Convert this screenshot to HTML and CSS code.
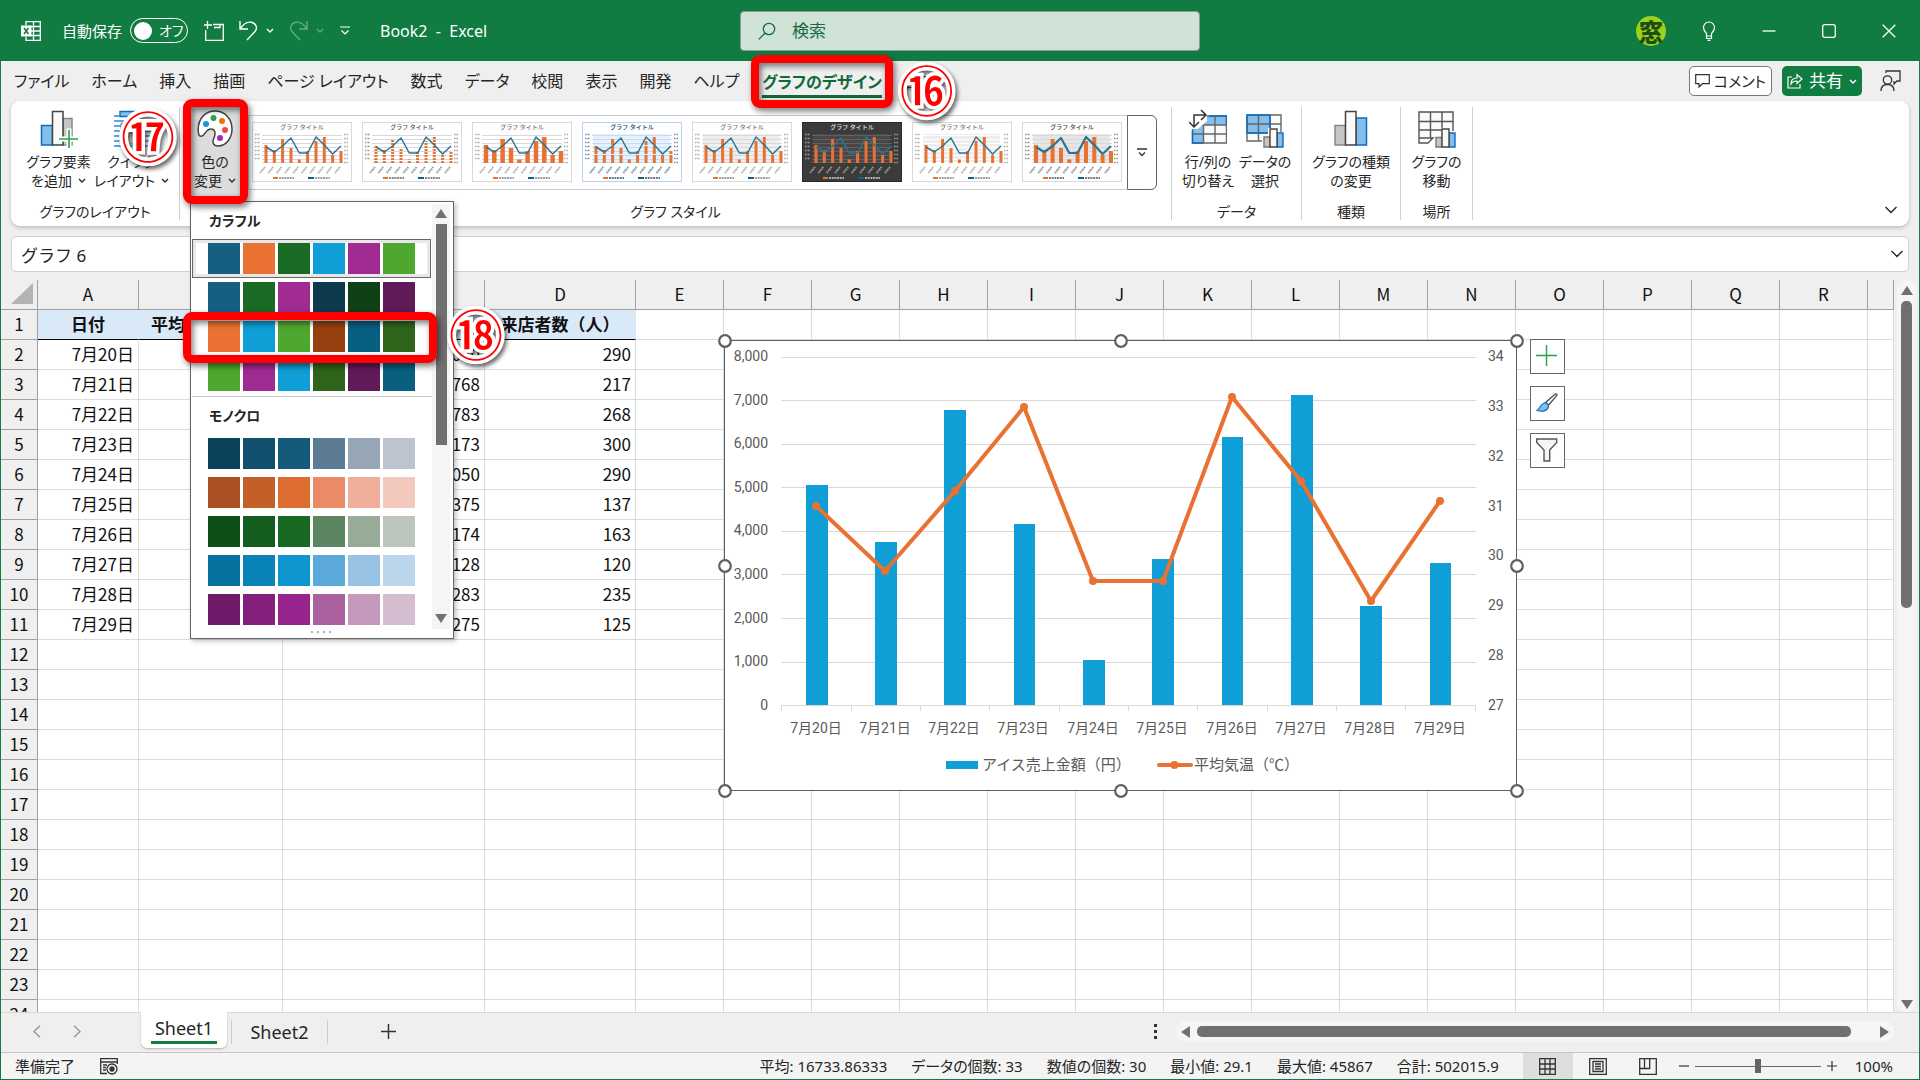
FILE: index.html
```html
<!DOCTYPE html>
<html lang="ja">
<head>
<meta charset="utf-8">
<title>Book2 - Excel</title>
<link rel="stylesheet" href="styles.css">
</head>
<body>
<svg class="defs" aria-hidden="true">
  <symbol id="chev" viewBox="0 0 8 5"><path d="M1 1l3 3 3-3" fill="none" stroke="currentColor" stroke-width="1.3"/></symbol>
  <symbol id="chev-lg" viewBox="0 0 14 8"><path d="M1.500 1l5.500 5.500L12.500 1" fill="none" stroke="currentColor" stroke-width="1.400"/></symbol>
  <symbol id="thumb" viewBox="0 0 100 60">
    <rect x=".5" y=".5" width="99" height="59" fill="var(--bg)" stroke="var(--edge)"/>
    <rect x="11" y="12" width="77" height="29" fill="var(--plot)"/>
    <path d="M10 13.500h80M10 17.500h80M10 21.500h80M10 25.500h80M10 29.500h80M10 33.500h80M10 37.500h80M10 40.500h80" stroke="var(--grid)" stroke-width="1"/>
    <path d="M3 12.500h5M3 16.500h5M3 20.500h5M3 24.500h5M3 28.500h5M3 32.500h5M3 36.500h5M92 12.500h4M92 16.500h4M92 20.500h4M92 24.500h4M92 28.500h4M92 32.500h4M92 36.500h4M92 40.500h4" stroke="var(--ink)" stroke-width="1.500" opacity=".6" stroke-dasharray="1 .5"/>
    <path d="M14 41V23M22.300 41V28M30.600 41V17M39 41V26M47.300 41v-3.500M55.600 41V29M64 41V19M72.300 41V15M80.600 41v-8M89 41V29" stroke="#e97132" stroke-width="var(--bw)" stroke-dasharray="var(--dash)"/>
    <path d="M14 25l8.300 5 8.300-6 8.400-8 8.300 15h8.300L64 15l8.300 8 8.300 9 8.400-8" fill="none" stroke="#2b7493" stroke-width="var(--lw)" stroke-linejoin="round"/>
    <path d="M13 45l-5 6M21.300 45l-5 6M29.600 45l-5 6M38 45l-5 6M46.300 45l-5 6M54.600 45l-5 6M63 45l-5 6M71.300 45l-5 6M79.600 45l-5 6M88 45l-5 6" stroke="var(--ink)" stroke-width="2" opacity=".55" stroke-dasharray="1.500 .6"/>
    <path d="M21 56h5" stroke="#e97132" stroke-width="2"/><path d="M56 56h6" stroke="#156082" stroke-width="2"/>
    <path d="M27 56h15M63 56h15" stroke="var(--ink)" stroke-width="2" stroke-dasharray="2 .7" opacity=".7"/>
    <text x="50" y="7" text-anchor="middle" fill="var(--ink)">グラフ タイトル</text>
  </symbol>
</svg>

<div class="window">
  <header class="titlebar">
    <div class="quick">
      <svg class="i-excel" width="20" height="20" viewBox="0 0 20 20" fill="none" stroke="#fff"><path d="M5 4V.7h14.300v18.600H5V16M5 5.500h14M10 10h9M10 14.500h9M12.500.7v18.600" stroke-width="1.300"/><rect x="0" y="4.500" width="10.500" height="11" fill="#fff" stroke="none"/><path d="M3 7l4.500 6M7.500 7L3 13" stroke="#107c41" stroke-width="1.600"/></svg>
      <span class="auto-label" id="auto">自動保存</span>
      <button class="toggle" role="switch" aria-checked="false" aria-labelledby="auto"><i></i>オフ</button>
      <button class="bare save" aria-label="保存"><svg width="20" height="20" viewBox="0 0 20 20" fill="none" stroke="#fff" stroke-width="1.300"><path d="M9 3.500h10.300v15.800H1.700V9M3.500 0v8M0 4h8M16 3.500v3h-6"/></svg></button>
      <button class="bare undo" aria-label="元に戻す"><svg width="19" height="21" viewBox="0 0 19 21" fill="none" stroke="#fff" stroke-width="1.400"><path d="M1 1v8h8M1.500 8.500C5 3 9 1.500 12.500 2.300c4.500 1 6.500 5.700 3.500 9.200L8 20"/></svg><svg class="c" width="8" height="5"><use href="#chev"/></svg></button>
      <button class="bare redo" aria-label="やり直し" disabled><svg width="19" height="21" viewBox="0 0 19 21" fill="none" stroke="#fff" stroke-width="1.400"><path d="M18 1v8h-8M17.500 8.500C14 3 10 1.500 6.500 2.300 2 3.300 0 8 3 11.500L11 20"/></svg><svg class="c" width="8" height="5"><use href="#chev"/></svg></button>
      <button class="bare more" aria-label="クイック アクセスの設定"><svg width="10" height="9" viewBox="0 0 10 9" fill="none" stroke="#fff" stroke-width="1.200"><path d="M0 1h10M1.500 4.500L5 8l3.500-3.500"/></svg></button>
      <span class="book">Book2&nbsp; -&nbsp; Excel</span>
    </div>
    <label class="search"><svg width="18" height="18" viewBox="0 0 18 18" fill="none" stroke="#176b3e" stroke-width="1.300"><circle cx="11" cy="7" r="5.700"/><path d="M7 11.200L.8 17.400"/></svg><input type="text" placeholder="検索" aria-label="検索"></label>
    <div class="wincontrols">
      <span class="avatar">窓</span>
      <button class="bare" aria-label="ヒント"><svg width="14" height="20" viewBox="0 0 14 20" fill="none" stroke="#fff" stroke-width="1.200"><path d="M4.500 15v-2.500C2.500 10.500 1.500 9 1.500 6.500a5.500 5.500 0 0 1 11 0c0 2.500-1 4-3 6V15zM4.500 15v2.500h5V15M5.500 19.300h3"/></svg></button>
      <button class="bare" aria-label="最小化"><svg width="14" height="14" viewBox="0 0 14 14" stroke="#fff" stroke-width="1.300"><path d="M.5 7h13"/></svg></button>
      <button class="bare" aria-label="最大化"><svg width="14" height="14" viewBox="0 0 14 14" fill="none" stroke="#fff" stroke-width="1.300"><rect x=".7" y=".7" width="12.600" height="12.600" rx="2"/></svg></button>
      <button class="bare" aria-label="閉じる"><svg width="14" height="14" viewBox="0 0 14 14" stroke="#fff" stroke-width="1.300"><path d="M.7.7l12.600 12.600M13.300.7L.7 13.300"/></svg></button>
    </div>
  </header>

  <nav class="tabs">
    <a href="#">ファイル</a><a href="#">ホーム</a><a href="#">挿入</a><a href="#">描画</a><a href="#">ページ レイアウト</a><a href="#">数式</a><a href="#">データ</a><a href="#">校閲</a><a href="#">表示</a><a href="#">開発</a><a href="#">ヘルプ</a>
    <span class="tabwrap"><a href="#" class="current">グラフのデザイン</a><span class="mark mark-tab"></span><b class="num num-tab">⑯</b></span><a href="#" class="fmt">書式</a>
    <div class="tabs-right">
      <button class="comment"><svg width="15" height="14" viewBox="0 0 15 14" fill="none" stroke="#333" stroke-width="1.200"><path d="M.7.7h13.600v9H7.500L4 13V9.700H.7z"/></svg>コメント</button>
      <button class="share"><svg width="16" height="16" viewBox="0 0 16 16" fill="none" stroke="#fff" stroke-width="1.200"><path d="M5 4H1v11h12v-4M4 11c0-4 2-6 6-6V1.500L15 6l-5 4.500V8C7.500 8 5.500 8.500 4 11z"/></svg>共有<svg width="8" height="5"><use href="#chev"/></svg></button>
      <button class="bare dark" aria-label="フィードバック"><svg width="21" height="22" viewBox="0 0 21 22" fill="none" stroke="#333" stroke-width="1.300"><circle cx="7.500" cy="10" r="4.200"/><path d="M1 21c0-4 2.500-6.500 6.500-6.500S14 17 14 21M6 3V1h14v10h-3l-3 3v-3"/></svg></button>
    </div>
  </nav>

  <section class="ribbon">
    <div class="group">
      <div class="tools">
        <button class="tool w73"><svg width="38" height="40" viewBox="0 0 38 40"><path d="M1.500 16.500h11V36h-11z" fill="#83beec" stroke="#0f6cbd" stroke-width="1.500"/><path d="M23 9.500h9V36h-9z" fill="#c8c6c4" stroke="#8a8886" stroke-width="1.500"/><path d="M12.500 2.500H23V36H12.500z" fill="#fafafa" stroke="#444" stroke-width="1.500"/><path d="M29 19.500v21M18 30h21" stroke="#fff" stroke-width="5"/><path d="M29 21v18M19 30h19" stroke="#26a148" stroke-width="1.600"/></svg><span>グラフ要素</span><span>を追加 <svg width="8" height="5"><use href="#chev"/></svg></span></button>
        <button class="tool w73"><svg width="38" height="40" viewBox="0 0 38 40"><path d="M7 2.500h24v5H7z" fill="#83beec" stroke="#0f6cbd" stroke-width="1.400"/><path d="M1 7h6M1 12h36M1 17h36M1 22h36M1 27h36M1 32h36M1 37h36" stroke="#2b88d8" stroke-width="1.400"/><path d="M8 14h20v21H8z" fill="#c8c6c4" stroke="#777"/></svg><span>クイック</span><span>レイアウト <svg width="8" height="5"><use href="#chev"/></svg></span></button>
      </div>
      <div class="glabel">グラフのレイアウト</div>
      <b class="num num-btn">⑰</b>
    </div>
    <div class="group grow">
      <div class="tools styles">
        <div class="colorwrap">
          <button class="tool color" aria-expanded="true"><svg width="36" height="40" viewBox="0 0 36 40"><path d="M1.200 22C.5 9 9 2 18 2c10 0 17 8 17 18 0 8-5 17-14 17-5 0-6-4-4-8 2-5 1-9-3-9-5 0-6 6-9 7-3 1-3.600-1.500-3.800-5z" fill="#fff" stroke="#444" stroke-width="1.500"/><circle cx="9" cy="15" r="3" fill="#1e8fd8"/><circle cx="16.500" cy="9" r="3" fill="#2fa04a"/><circle cx="25" cy="12" r="3" fill="#e8750a"/><circle cx="28" cy="21" r="3" fill="#f0474b"/><circle cx="23" cy="29" r="3" fill="#9b2fae"/></svg><span>色の</span><span>変更 <svg width="8" height="5"><use href="#chev"/></svg></span></button>
          <div class="mark mark-btn"></div>
          <div class="menu">
            <div class="menu-list">
              <h2>カラフル</h2>
              <div class="palettes" id="vivid"></div>
              <hr>
              <h2>モノクロ</h2>
              <div class="palettes" id="mono"></div>
            </div>
            <div class="menu-scroll"><i class="up"></i><i class="bar"></i><i class="down"></i></div>
            <div class="grip"><i></i><i></i><i></i><i></i></div>
          </div>
        </div>
        <div class="gallery">
          <div class="thumbs">
            <svg class="th"><use href="#thumb"/></svg>
            <svg class="th t2"><use href="#thumb"/></svg>
            <svg class="th t3"><use href="#thumb"/></svg>
            <svg class="th t4"><use href="#thumb"/></svg>
            <svg class="th t5"><use href="#thumb"/></svg>
            <svg class="th t6"><use href="#thumb"/></svg>
            <svg class="th t7"><use href="#thumb"/></svg>
            <svg class="th t8"><use href="#thumb"/></svg>
          </div>
          <button class="expand" aria-label="その他"><svg width="10" height="9" viewBox="0 0 10 9" fill="none" stroke="#333" stroke-width="1.300"><path d="M0 1h10M2 4.500L5 7.500l3-3"/></svg></button>
        </div>
      </div>
      <div class="glabel">グラフ スタイル</div>
    </div>
    <div class="group w130">
      <div class="tools">
        <button class="tool w57"><svg width="38" height="40" viewBox="0 0 38 40"><path d="M3 7h34v27H3z" fill="#fafafa"/><path d="M14 7h23v9H14zM3 16h11v18H3z" fill="#83beec"/><path d="M3.500 16v18h34V7H15M14.500 16v18M26 7v27M3.500 16h34M3.500 25h34" fill="none" stroke="#666" stroke-width="1.400"/><path d="M14.500 34H3.500V22M20 7h17.500v9" fill="none" stroke="#0f6cbd" stroke-width="1.400"/><path d="M0 0h18v12l-9 8H0z" fill="#fff"/><path d="M5 18V6h12M12 1l5 5-5 5M0 13l5 5 5-5" fill="none" stroke="#333" stroke-width="1.500"/></svg><span>行/列の</span><span>切り替え</span></button>
        <button class="tool w57"><svg width="38" height="40" viewBox="0 0 38 40"><path d="M1 6h34v26H1z" fill="#fafafa"/><path d="M1 6h23v18H1z" fill="#83beec"/><path d="M1 6h34v26H1zM12.500 6v26M24 6v26M1 15h34M1 24h34" fill="none" stroke="#666" stroke-width="1.400"/><path d="M24 6H1v18h23z" fill="none" stroke="#0f6cbd" stroke-width="1.400"/><path d="M16 27h6v-8h9v4h7v17H16z" fill="#fff"/><path d="M18 28h6v10h-6z" fill="#c8c6c4" stroke="#777" stroke-width="1.400"/><path d="M31 24h6v14h-6z" fill="#83beec" stroke="#0f6cbd" stroke-width="1.400"/><path d="M24 20h7v18h-7z" fill="#fafafa" stroke="#444" stroke-width="1.400"/></svg><span>データの</span><span>選択</span></button>
      </div>
      <div class="glabel">データ</div>
    </div>
    <div class="group w99">
      <div class="tools">
        <button class="tool"><svg width="38" height="40" viewBox="0 0 38 40"><path d="M3 16.500h10.500V36H3z" fill="#c8c6c4" stroke="#8a8886" stroke-width="1.500"/><path d="M24 9h10.500v27H24z" fill="#83beec" stroke="#0f6cbd" stroke-width="1.500"/><path d="M13.500 2.500H24V36H13.500z" fill="#fafafa" stroke="#444" stroke-width="1.500"/></svg><span>グラフの種類</span><span>の変更</span></button>
      </div>
      <div class="glabel">種類</div>
    </div>
    <div class="group w72">
      <div class="tools">
        <button class="tool"><svg width="38" height="40" viewBox="0 0 38 40"><path d="M1 3h34v21H20v8h-8l-3 3H1z" fill="#fafafa"/><path d="M35 22V3H1v31h9l5-5H1M12.500 3v26M24 3v16M1 12.500h34M1 21h24" fill="none" stroke="#555" stroke-width="1.400"/><path d="M18 28.500h6V38h-6z" fill="#c8c6c4" stroke="#777" stroke-width="1.400"/><path d="M31 24h6v14h-6z" fill="#83beec" stroke="#0f6cbd" stroke-width="1.400"/><path d="M24 20h7v18h-7z" fill="#fafafa" stroke="#444" stroke-width="1.400"/></svg><span>グラフの</span><span>移動</span></button>
      </div>
      <div class="glabel">場所</div>
    </div>
    <button class="bare collapse" aria-label="リボンを折りたたむ"><svg width="14" height="8"><use href="#chev-lg"/></svg></button>
  </section>

  <div class="formula"><input type="text" value="グラフ 6" aria-label="名前ボックス"><svg width="14" height="8"><use href="#chev-lg"/></svg></div>

  <main class="sheet">
    <div class="canvas">
      <table class="grid">
        <colgroup id="cols"></colgroup>
        <thead><tr id="head"></tr></thead>
        <tbody id="body"></tbody>
      </table>
      <svg class="chart" width="810" height="468" viewBox="716 332 810 468">
        <rect x="724.500" y="340.500" width="792" height="450" fill="#fff" stroke="#5f5f5f"/>
        <path d="M781 357.500h695M781 400.500h695M781 444.500h695M781 487.500h695M781 531.500h695M781 574.500h695M781 618.500h695M781 662.500h695M781 705.500h695" stroke="#d9d9d9"/>
        <path d="M781.500 705v6M851.500 705v6M920.500 705v6M989.500 705v6M1059.500 705v6M1128.500 705v6M1197.500 705v6M1267.500 705v6M1336.500 705v6M1405.500 705v6M1475.500 705v6" stroke="#d9d9d9"/>
        <path d="M806 485h22v220h-22zM875 542h22v163h-22zM944 410h22v295h-22zM1014 524h21v181h-21zM1083 660h22v45h-22zM1152 559h22v146h-22zM1222 437h21v268h-21zM1291 395h22v310h-22zM1360 606h22v99h-22zM1430 563h21v142h-21z" fill="#0f9ed5"/>
        <path d="M816 506L885 571 955 491 1024 407 1093 581H1163L1232 397 1301 481 1371 601 1440 501" fill="none" stroke="#e97132" stroke-width="4" stroke-linejoin="round"/>
        <g fill="#e97132"><circle cx="816" cy="506" r="4"/><circle cx="885" cy="571" r="4"/><circle cx="955" cy="491" r="4"/><circle cx="1024" cy="407" r="4"/><circle cx="1093" cy="581" r="4"/><circle cx="1163" cy="581" r="4"/><circle cx="1232" cy="397" r="4"/><circle cx="1301" cy="481" r="4"/><circle cx="1371" cy="601" r="4"/><circle cx="1440" cy="501" r="4"/></g>
        <g class="axis" text-anchor="end"><text x="768" y="361">8,000</text><text x="768" y="405">7,000</text><text x="768" y="448">6,000</text><text x="768" y="492">5,000</text><text x="768" y="535">4,000</text><text x="768" y="579">3,000</text><text x="768" y="623">2,000</text><text x="768" y="666">1,000</text><text x="768" y="710">0</text></g>
        <g class="axis"><text x="1488" y="361">34</text><text x="1488" y="411">33</text><text x="1488" y="461">32</text><text x="1488" y="511">31</text><text x="1488" y="560">30</text><text x="1488" y="610">29</text><text x="1488" y="660">28</text><text x="1488" y="710">27</text></g>
        <g class="axis" text-anchor="middle"><text x="816" y="733">7月20日</text><text x="885" y="733">7月21日</text><text x="954" y="733">7月22日</text><text x="1023" y="733">7月23日</text><text x="1093" y="733">7月24日</text><text x="1162" y="733">7月25日</text><text x="1232" y="733">7月26日</text><text x="1301" y="733">7月27日</text><text x="1370" y="733">7月28日</text><text x="1440" y="733">7月29日</text></g>
        <path d="M946 761h32v8h-32z" fill="#0f9ed5"/><path d="M1159 765h32" stroke="#e97132" stroke-width="4" stroke-linecap="round"/><circle cx="1174.500" cy="765" r="4" fill="#e97132"/>
        <g class="legend"><text x="982" y="770">アイス売上金額（円）</text><text x="1194" y="770">平均気温（℃）</text></g>
        <g fill="#fff" stroke="#5f5f5f" stroke-width="2.200"><circle cx="725" cy="341" r="5.800"/><circle cx="1121" cy="341" r="5.800"/><circle cx="1517" cy="341" r="5.800"/><circle cx="725" cy="566" r="5.800"/><circle cx="1517" cy="566" r="5.800"/><circle cx="725" cy="791" r="5.800"/><circle cx="1121" cy="791" r="5.800"/><circle cx="1517" cy="791" r="5.800"/></g>
      </svg>
      <div class="chart-tools">
        <button aria-label="グラフ要素"><svg width="22" height="22" viewBox="0 0 22 22"><path d="M10.500 0v21M0 10.500h21" stroke="#26a148" stroke-width="1.400"/></svg></button>
        <button aria-label="グラフ スタイル"><svg width="22" height="22" viewBox="0 0 22 22"><path d="M9.500 10.500L19 2.200c1.500-1 2.500 0 1.600 1.500L12.800 13z" fill="#fff" stroke="#444" stroke-width="1.200"/><path d="M1 18.500c3-1 3-6.500 7.500-7.500 2.500-.3 4.500 2 3.800 4-1 4-6.300 5-11.300 3.500z" fill="#83beec" stroke="#0f6cbd" stroke-width="1.200"/></svg></button>
        <button aria-label="グラフ フィルター"><svg width="22" height="24" viewBox="0 0 22 24"><path d="M.7 1h20v3.500l-7 7.500v11H8V12L.7 4.500z" fill="#f5f5f5" stroke="#555" stroke-width="1.400"/></svg></button>
      </div>
    </div>
    <div class="vscroll"><i class="up"></i><i class="bar"></i><i class="down"></i></div>
  </main>

  <div class="sheetbar">
    <button class="bare nav" aria-label="前のシート"><svg width="8" height="13" viewBox="0 0 8 13" fill="none" stroke="#999" stroke-width="1.400"><path d="M7 .7L1 6.500l6 5.800"/></svg></button>
    <button class="bare nav" aria-label="次のシート"><svg width="8" height="13" viewBox="0 0 8 13" fill="none" stroke="#999" stroke-width="1.400"><path d="M1 .7l6 5.800-6 5.800"/></svg></button>
    <a href="#" class="stab active"><span>Sheet1</span></a>
    <a href="#" class="stab other"><span>Sheet2</span></a>
    <button class="bare add" aria-label="新しいシート"><svg width="15" height="15" viewBox="0 0 15 15" stroke="#333" stroke-width="1.500"><path d="M7.500 0v15M0 7.500h15"/></svg></button>
    <div class="dots"><i></i><i></i><i></i></div>
    <div class="hscroll"><i class="left"></i><i class="bar"></i><i class="right"></i></div>
  </div>

  <footer class="status">
    <span class="ready">準備完了</span>
    <svg width="18" height="17" viewBox="0 0 18 17" fill="none" stroke="#333" stroke-width="1.300"><path d="M7 15.500H.7V.7h16.600V6M.7 4h16.600M3 7h4M3 9.500h3M3 12h3"/><circle cx="12" cy="11" r="5"/><circle cx="12" cy="11" r="2" fill="#333"/></svg>
    <div class="stats"><span>平均: 16733.86333</span><span>データの個数: 33</span><span>数値の個数: 30</span><span>最小値: 29.1</span><span>最大値: 45867</span><span>合計: 502015.9</span></div>
    <div class="views">
      <button class="on" aria-label="標準"><svg width="17" height="17" viewBox="0 0 17 17" fill="none" stroke="#333" stroke-width="1.300"><path d="M.7.7h15.600v15.600H.7zM6 .7v15.600M11 .7v15.600M.7 6h15.600M.7 11h15.600"/></svg></button>
      <button aria-label="ページ レイアウト"><svg width="18" height="17" viewBox="0 0 18 17" fill="none" stroke="#333" stroke-width="1.300"><path d="M.7.7h16.600v15.600H.7zM4 3.500h10v10H4zM6 6h6M6 8.500h6M6 11h6"/></svg></button>
      <button aria-label="改ページ プレビュー"><svg width="18" height="17" viewBox="0 0 18 17" fill="none" stroke="#333" stroke-width="1.300"><path d="M.7.7h16.600v15.600H.7zM.7 10.500h10V.7M5.500.7v9.800"/></svg></button>
    </div>
    <button class="bare zoomb" aria-label="縮小"><svg width="10" height="10" viewBox="0 0 10 10" stroke="#333" stroke-width="1.200"><path d="M0 5h10"/></svg></button>
    <input type="range" min="0" max="100" value="50" aria-label="ズーム">
    <button class="bare zoomb" aria-label="拡大"><svg width="10" height="10" viewBox="0 0 10 10" stroke="#333" stroke-width="1.200"><path d="M0 5h10M5 0v10"/></svg></button>
    <span class="pct">100%</span>
  </footer>
</div>
<script src="script.js"></script>
</body>
</html>
```
FILE: styles.css
```css
* { box-sizing: border-box; }
body, h2 { margin: 0; }
body {
  font-family: "Noto Sans", "Noto Sans CJK JP", sans-serif;
  font-size: 15px;
  line-height: 20px;
  color: #262626;
  background: #efefef;
}
button, input { font: inherit; color: inherit; padding: 0; margin: 0; }
button { font-feature-settings: inherit; }
a { color: inherit; text-decoration: none; }
svg { display: block; flex: none; }
.defs { position: absolute; width: 0; height: 0; }
.defs text { font: 500 6px "Noto Sans CJK JP", sans-serif; }

.window {
  display: flex;
  flex-direction: column;
  height: 100vh;
  border: solid #107c41;
  border-width: 0 1px 1px;
  overflow: hidden;
  font-feature-settings: "palt";
}
.bare { display: flex; align-items: center; justify-content: center; border: 0; background: none; }

/* title bar */
.titlebar {
  display: grid;
  grid-template-columns: 1fr 460px 1fr;
  align-items: center;
  height: 61px;
  flex: none;
  padding-left: 20px;
  background: #107c41;
  color: #fff;
}
.quick { display: flex; align-items: center; }
.auto-label { margin: 0 8px 0 21px; }
.toggle {
  display: flex;
  align-items: center;
  gap: 7px;
  width: 58px;
  height: 25px;
  padding: 0 0 0 3px;
  border: 1px solid #fff;
  border-radius: 13px;
  background: none;
  font-size: 14px;
}
.toggle i { width: 18px; height: 18px; border-radius: 50%; background: #fff; }
.save { margin-left: 16px; }
.undo, .redo { gap: 8px; margin-left: 15px; color: #fff; }
.redo { opacity: .35; }
.more { margin-left: 16px; }
.book { margin-left: 30px; font-size: 16px; white-space: nowrap; }
.search {
  display: flex;
  align-items: center;
  gap: 16px;
  height: 40px;
  padding-left: 17px;
  border: 1px solid #8a9c92;
  border-radius: 4px;
  background: #cfe3d8;
}
.search input { flex: 1; min-width: 0; border: 0; outline: 0; background: none; font-size: 17px; }
.search input::placeholder { color: #176b3e; opacity: 1; }
.wincontrols { display: flex; justify-content: flex-end; align-items: center; }
.wincontrols .bare { width: 60px; height: 40px; }
.avatar {
  width: 30px;
  height: 30px;
  margin-right: 13px;
  border-radius: 50%;
  background: #9ad21c;
  color: #1d4d12;
  font: 900 24px/30px "Noto Sans CJK JP", sans-serif;
  text-align: center;
}

/* ribbon tabs */
.tabs {
  display: flex;
  align-items: center;
  height: 40px;
  flex: none;
  padding-left: 2px;
  font-size: 16px;
  white-space: nowrap;
}
.tabs a { padding: 0 11px; line-height: 24px; }
.tabwrap { position: relative; z-index: 6; margin-left: 1px; }
.tabwrap .current { display: block; padding: 0; margin: 0 11px -4px; color: #0e6b38; font-weight: 700; border-bottom: 3px solid #0e6b38; line-height: 26px; }
.tabs-right { display: flex; align-items: center; margin-left: auto; gap: 10px; padding-right: 18px; }
.comment, .share { display: flex; align-items: center; justify-content: center; gap: 4px; height: 30px; border-radius: 5px; }
.comment { width: 83px; border: 1px solid #777; background: #fff; font-size: 15px; }
.share { width: 80px; gap: 6px; border: 0; background: #107c41; color: #fff; font-size: 17px; }
.tabs-right .dark { margin-left: 8px; }

/* annotations */
.mark {
  position: absolute;
  border: 8px solid #f00;
  border-radius: 9px;
  filter: drop-shadow(2px 3px 3px rgba(0, 0, 0, .55));
  pointer-events: none;
}
.mark-tab { inset: -14px 0 -14px 0; }
.mark-btn { inset: -8px -8px -6px -7px; z-index: 4; }
.mark-row { inset: -5px -6px -7px -9px; }
.num {
  position: absolute;
  z-index: 8;
  width: 60px;
  color: #f00;
  font: 500 54px/60px "Noto Sans CJK JP", sans-serif;
  text-align: center;
  -webkit-text-stroke: 7px #fff;
  paint-order: stroke fill;
  filter: drop-shadow(2px 3px 2px rgba(0, 0, 0, .6));
  pointer-events: none;
}
.num-tab { left: 100%; top: -10px; margin-left: 4px; }
.num-btn { left: 107px; top: -2px; }
.num-row { left: 100%; top: -14px; margin-left: 15px; }

/* ribbon */
.ribbon {
  position: relative;
  z-index: 5;
  display: flex;
  height: 125px;
  flex: none;
  margin: 0 10px;
  padding: 6px 0;
  border-radius: 9px;
  background: #fff;
  box-shadow: 0 2px 4px rgba(0, 0, 0, .2);
  font-size: 14px;
}
.group { position: relative; display: flex; flex-direction: column; justify-content: space-between; width: 169px; flex: none; border-right: 1px solid #d0d0d0; }
.group.grow { width: auto; flex: 0 1 992px; }
.w130 { width: 130px; }
.w99 { width: 99px; }
.w72 { width: 72px; }
.tools { display: flex; justify-content: center; }
.glabel { text-align: center; line-height: 16px; }
.tool {
  display: flex;
  flex-direction: column;
  align-items: center;
  min-width: 48px;
  height: 91px;
  padding: 2px 0 0;
  border: 0;
  background: none;
  line-height: 19px;
  white-space: nowrap;
}
.tool > svg { margin-bottom: 3px; }
.tool span { display: flex; align-items: center; gap: 6px; }
.w73 { width: 73px; }
.w57 { width: 57px; }
.styles { justify-content: flex-start; padding-left: 10px; gap: 8px; }
.colorwrap { position: relative; height: 91px; }
.color { width: 50px; background: #dcdcdc; }
.gallery { display: flex; flex: none; height: 75px; margin-top: 8px; border: 1px solid #ccc; border-radius: 0 6px 6px 0; }
.thumbs { display: flex; gap: 10px; padding: 6px 6px 0 3px; }
.expand { display: flex; align-items: center; justify-content: center; width: 30px; margin: -1px; border: 1px solid #666; border-radius: 0 6px 6px 0; background: #fff; }
.collapse { position: absolute; right: 11px; bottom: 12px; }
.th {
  width: 100px;
  height: 60px;
  --bg: #fff; --edge: #d9d9d9; --plot: #fff; --grid: #d9d9d9; --ink: #777;
  --bw: 3px; --lw: 1.5px; --dash: none;
}
.t2 { --dash: 2 1; --ink: #555; }
.t3 { --bw: 4.5px; }
.t4 { --edge: #b5d3ef; --plot: #e6f1fb; --grid: #c5dcf2; --ink: #24405f; --dash: 8 1; }
.t5 { --plot: #eee; }
.t6 { --bg: #3b3b3b; --edge: #2a2a2a; --plot: #484848; --grid: #606060; --ink: #e0e0e0; }
.t7 { --plot: #eee; --grid: #fff; }
.t8 { --plot: #e6e6e6; --bw: 4px; --lw: 2.2px; --ink: #444; }

/* colour menu */
.menu {
  position: absolute;
  left: 0;
  top: 94px;
  z-index: 3;
  display: grid;
  grid-template-columns: 1fr 18px;
  width: 264px;
  padding: 0 3px 0 1px;
  border: 1px solid #666;
  background: #fff;
  box-shadow: 2px 2px 5px rgba(0, 0, 0, .25);
}
.menu h2 { padding: 9px 0 8px 17px; font-size: 14px; line-height: 20px; }
.menu hr { margin: 1px 0 0; border: 0; border-top: 1px solid #ccc; }
.palette {
  position: relative;
  display: flex;
  gap: 3px;
  width: 239px;
  height: 39px;
  padding: 4px 0 4px 16px;
  border: 0;
  background: #fff;
}
.palette.selected { box-shadow: inset 0 0 0 1px #666, inset 0 0 0 4px #e8e8e8; }
.palette i { width: 32px; height: 31px; }
.palette.pick { z-index: 4; }
.menu-scroll { display: flex; flex-direction: column; align-items: center; margin-top: 2px; background: #f5f5f5; }
.up, .down { border: 6px solid transparent; }
.up { border-top: 0; border-bottom: 9px solid #707070; }
.down { border-bottom: 0; border-top: 9px solid #707070; }
.bar { background: #707070; border-radius: 5px; }
.menu-scroll .up { margin: 5px 0 6px; }
.menu-scroll .bar { width: 11px; height: 221px; border-radius: 0; }
.menu-scroll .down { margin: auto 0 6px; }
.grip { grid-column: 1 / 3; display: flex; justify-content: center; gap: 4px; height: 9px; padding: 2px 0 0; }
.grip i { width: 2px; height: 2px; background: #b0b0b8; }

/* name box */
.formula {
  display: flex;
  align-items: center;
  justify-content: space-between;
  height: 36px;
  flex: none;
  margin: 10px 10px 8px;
  padding: 0 4px 0 9px;
  border: 1px solid #d0d0d0;
  border-radius: 5px;
  background: #fff;
}
.formula input { width: 160px; padding-top: 4px; border: 0; outline: 0; background: none; font-size: 17px; font-feature-settings: normal; }

/* worksheet */
.sheet { display: flex; flex: 1; min-height: 0; font: 17px/24px "Noto Sans CJK JP", sans-serif; font-feature-settings: normal; }
.canvas { position: relative; flex: 1; min-width: 0; overflow: hidden; background: #fff; }
.grid { width: 100%; table-layout: fixed; border-collapse: separate; border-spacing: 0; color: #111; }
.grid th, .grid td { height: 30px; padding: 0 4px 2px; border: solid #dcdcdc; border-width: 0 1px 1px 0; white-space: nowrap; overflow: hidden; text-align: right; font-weight: 400; }
.grid th { padding: 0 0 2px; background: #efefef; border-color: #a0a0a0; text-align: center; }
.grid .title { background: #dae9f8; border-right-color: #dae9f8; border-bottom-color: #000; text-align: center; font-weight: 700; padding: 0 0 2px; }
.corner::after { content: ""; display: block; margin-left: 10px; border: solid transparent; border-width: 0 0 21px 22px; border-bottom-color: #b3b3b3; width: 0; }
.c-head { width: 37px; }
.c-date { width: 101px; }
.c-temp { width: 144px; }
.c-sales { width: 202px; }
.c-guest { width: 151px; }
.c-std { width: 88px; }
.chart { position: absolute; left: 715px; top: 52px; }
.axis text { font: 14px Roboto, "Noto Sans CJK JP", sans-serif; fill: #595959; }
.legend text { font: 15px "Noto Sans CJK JP", sans-serif; fill: #595959; }
.chart-tools { position: absolute; left: 1529px; top: 59px; display: grid; gap: 12px; }
.chart-tools button { display: flex; align-items: center; justify-content: center; width: 35px; height: 35px; padding: 0 2px 2px 0; border: 1px solid #666; background: #fff; }
.vscroll { display: flex; flex-direction: column; align-items: center; width: 19px; flex: none; margin: 0 3px; background: #f5f5f5; border-radius: 9px; }
.vscroll .up { margin: 6px 0; }
.vscroll .bar { width: 11px; height: 42%; }
.vscroll .down { margin: auto 0 3px; }

/* sheet tabs */
.sheetbar { display: flex; align-items: center; height: 40px; flex: none; padding-bottom: 2px; border-top: 1px solid #d8d8d8; font-size: 18px; }
.nav { width: 40px; height: 30px; }
.nav:first-child { margin-left: 16px; }
.stab { line-height: 24px; }
.active { align-self: flex-start; width: 86px; height: 36px; margin: -1px 4px 0 44px; padding: 3px 10px 0; border-radius: 0 0 6px 6px; background: #fff; box-shadow: 0 1px 2px rgba(0, 0, 0, .25); text-align: center; }
.active span { display: block; line-height: 26px; border-bottom: 3px solid #107c41; }
.other { width: 97px; border: solid #ccc; border-width: 0 1px; text-align: center; }
.add { width: 40px; margin-left: 40px; }
.dots { display: grid; gap: 3px; margin-left: auto; }
.dots i { width: 3px; height: 3px; background: #333; }
.hscroll { display: flex; align-items: center; width: 720px; height: 21px; margin: 0 24px 0 18px; padding: 0 6px; background: #f5f5f5; border-radius: 10px; }
.hscroll .bar { width: 654px; height: 11px; margin: 0 auto 0 7px; }
.left, .right { border: 6px solid transparent; }
.left { border-left: 0; border-right: 9px solid #707070; }
.right { border-right: 0; border-left: 9px solid #707070; }

/* status bar */
.status { display: flex; align-items: center; height: 27px; flex: none; border-top: 1px solid #c6c6c6; background: #f4f4f4; }
.ready { margin: 0 25px 0 14px; }
.stats { display: flex; gap: 24px; margin-left: auto; white-space: nowrap; }
.views { display: flex; align-self: stretch; margin-left: 24px; }
.views button { display: flex; align-items: center; justify-content: center; width: 50px; border: 0; background: none; }
.views .on { background: #dedede; }
.zoomb { width: 22px; height: 22px; }
.status input { width: 126px; height: 15px; -webkit-appearance: none; appearance: none; background: linear-gradient(#666, #666) center / 100% 1px no-repeat; }
.status input::-webkit-slider-thumb { -webkit-appearance: none; width: 6px; height: 14px; background: #666; }
.pct { margin: 0 26px 0 12px; }
```
FILE: script.js
```js
const el = (tag, cls, text) => {
  const node = document.createElement(tag);
  if (cls) node.className = cls;
  if (text !== undefined) node.textContent = text;
  return node;
};

// Worksheet
const letters = [..."ABCDEFGHIJKLMNOPQR", ""];
const widths = ["c-head", "c-date", "c-temp", "c-sales", "c-guest", ...Array(14).fill("c-std"), ""];
widths.forEach(w => document.getElementById("cols").append(el("col", w)));

const head = document.getElementById("head");
head.append(el("th", "corner"));
letters.forEach(l => head.append(el("th", "", l)));

const rows = [
  ["日付", "平均気温（℃）", "アイス売上金額（円）", "来店者数（人）"],
  ["7月20日", "31", "5060", "290"],
  ["7月21日", "29.6", "3768", "217"],
  ["7月22日", "31.3", "6783", "268"],
  ["7月23日", "33", "4173", "300"],
  ["7月24日", "29.5", "1050", "290"],
  ["7月25日", "29.5", "3375", "137"],
  ["7月26日", "33.2", "6174", "163"],
  ["7月27日", "31.5", "7128", "120"],
  ["7月28日", "29.1", "2283", "235"],
  ["7月29日", "31.1", "3275", "125"]
];
const body = document.getElementById("body");
for (let r = 0; r < 24; r++) {
  const tr = el("tr");
  tr.append(el("th", "", r + 1));
  letters.forEach((_, c) => {
    const value = rows[r] && rows[r][c];
    tr.append(el("td", r === 0 && value ? "title" : "", value || ""));
  });
  body.append(tr);
}

// Colour menu
const vivid = [
  "156082 e97132 196b24 0f9ed5 a02b93 4ea72e",
  "156082 196b24 a02b93 0d3a4e 0f4016 601a58",
  "e97132 0f9ed5 4ea72e 97400f 095f80 2f641c",
  "4ea72e a02b93 0f9ed5 2f641c 601a58 095f80"
];
const mono = [
  "0c415b 10506c 135a7b 5c7b95 97a6b6 bbc4cf",
  "ab5022 c55f28 dc6c2f ea8a66 f0ad9a f4c9bd",
  "0f4e17 155c1f 186a22 5c8561 97ab98 bcc6bd",
  "06719f 0a84b8 0e96d0 5caadb 97c2e3 bbd5eb",
  "701b69 84207b 96248c ab619f c499bb d4bdd1"
];
const fill = (id, list) => list.forEach((colours, n) => {
  const row = el("button", "palette");
  row.setAttribute("aria-label", "配色 " + (n + 1));
  colours.split(" ").forEach(c => {
    const swatch = el("i");
    swatch.style.background = "#" + c;
    row.append(swatch);
  });
  document.getElementById(id).append(row);
});
fill("vivid", vivid);
fill("mono", mono);
const vividRows = document.getElementById("vivid").children;
vividRows[0].classList.add("selected");
vividRows[2].classList.add("pick");
vividRows[2].append(el("span", "mark mark-row"), el("b", "num num-row", "⑱"));
```
